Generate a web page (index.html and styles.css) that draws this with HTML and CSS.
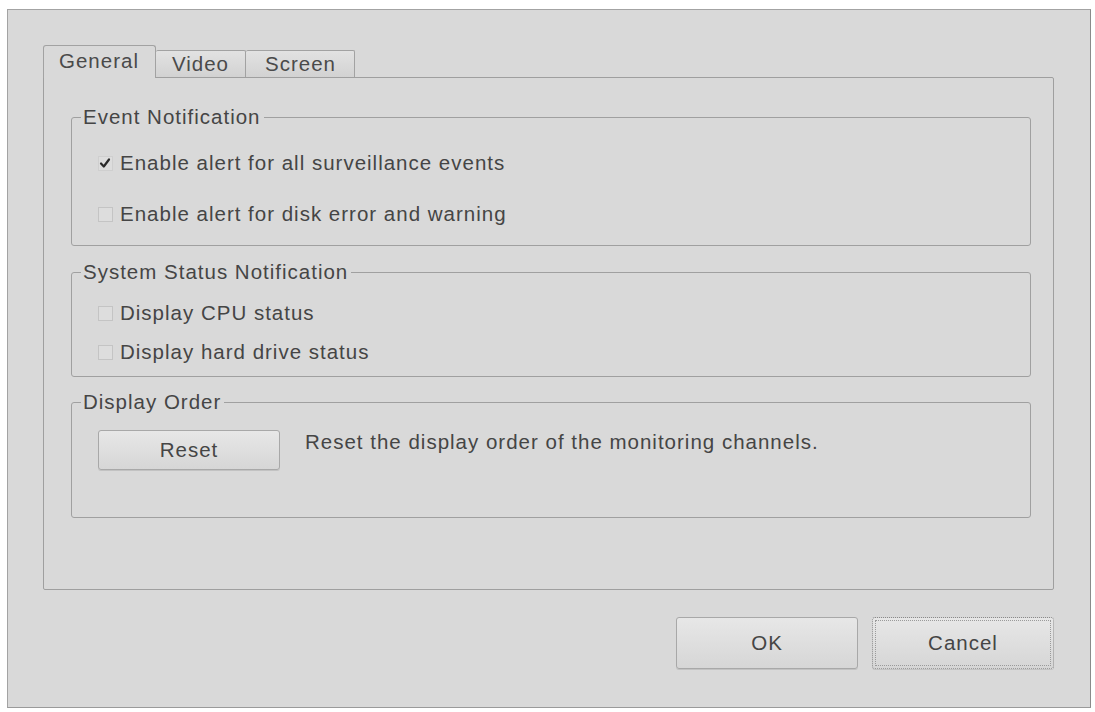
FILE: index.html
```html
<!DOCTYPE html>
<html lang="en">
<head>
<meta charset="utf-8">
<title>Settings</title>
<link rel="stylesheet" href="styles.css">
</head>
<body>
<div class="dialog">
  <div class="tabwidget">
    <div class="tabbar">
      <div class="tab tab-active">General</div>
      <div class="tab">Video</div>
      <div class="tab tab-wide">Screen</div>
    </div>
    <div class="panel">
      <fieldset class="group group-event">
        <legend>Event Notification</legend>
        <label class="row row-first">
          <span class="cb cb-checked"><svg viewBox="0 0 15 15" width="15" height="15"><path d="M3 7.5 L5.8 10.5 L11 3.5" fill="none" stroke="#2a2a2a" stroke-width="2.2" stroke-linecap="round" stroke-linejoin="round"/></svg></span>
          <span class="txt">Enable alert for all surveillance events</span>
        </label>
        <label class="row row-wide">
          <span class="cb"></span>
          <span class="txt">Enable alert for disk error and warning</span>
        </label>
      </fieldset>
      <fieldset class="group group-status">
        <legend>System Status Notification</legend>
        <label class="row row-first">
          <span class="cb"></span>
          <span class="txt">Display CPU status</span>
        </label>
        <label class="row row-tight">
          <span class="cb"></span>
          <span class="txt">Display hard drive status</span>
        </label>
      </fieldset>
      <fieldset class="group group-order">
        <legend>Display Order</legend>
        <div class="order-row">
          <button class="btn btn-reset" type="button">Reset</button>
          <span class="order-text">Reset the display order of the monitoring channels.</span>
        </div>
      </fieldset>
    </div>
  </div>
  <div class="actions">
    <button class="btn btn-action" type="button">OK</button>
    <button class="btn btn-action btn-focus" type="button">Cancel</button>
  </div>
</div>
</body>
</html>
```

FILE: styles.css
```css
* { box-sizing: border-box; }

html, body {
  margin: 0;
  padding: 0;
  background: #ffffff;
}

body {
  font-family: "Liberation Sans", Arial, sans-serif;
  font-size: 20.5px;
  letter-spacing: 1px;
  color: #454545;
}

.dialog {
  margin: 9px 0 0 7px;
  width: 1084px;
  height: 699px;
  background: #d9d9d9;
  border: 1px solid #a3a3a3;
  border-right-color: #8a8a8a;
  border-bottom-color: #9a9a9a;
  padding: 35px 36px 0 35px;
}

/* ---- tabs ---- */
.tabbar {
  display: flex;
  align-items: flex-end;
  height: 32px;
  position: relative;
  z-index: 1;
}

.tab {
  height: 27px;
  line-height: 25px;
  padding: 0 16px;
  border: 1px solid #a2a2a2;
  border-bottom: none;
  border-left: none;
  border-radius: 2px 2px 0 0;
  background: linear-gradient(#e2e2e2, #d2d2d2);
  color: #4a4a4a;
}

.tab-wide {
  padding: 0 18px 0 19px;
}

.tab-active {
  height: 33px;
  margin-bottom: -1px;
  line-height: 30px;
  padding: 0 16px 0 15px;
  border-left: 1px solid #a2a2a2;
  background: #d9d9d9;
  border-radius: 3px 3px 0 0;
}

.panel {
  height: 513px;
  border: 1px solid #9f9f9f;
  border-radius: 0 2px 2px 2px;
  padding: 27px 22px 0 27px;
}

/* ---- group boxes ---- */
.group {
  margin: 0;
  border: 1px solid #a0a0a0;
  border-radius: 3px;
  padding: 0 0 0 9px;
  min-width: 0;
}

.group + .group {
  margin-top: 14px;
}

.group legend {
  padding: 0 3px 0 2px;
  line-height: 24px;
  color: #454545;
}

.group-event { padding-top: 22px; padding-bottom: 19px; }
.group-status { padding-top: 17px; padding-bottom: 12px; }
.group.group-order { margin-top: 13px; padding-top: 16px; padding-bottom: 47px; }

.row {
  display: flex;
  align-items: center;
  height: 24px;
  padding-left: 17px;
}

.row-wide { margin-top: 27px; }
.row-tight { margin-top: 15px; }

.cb {
  width: 15px;
  height: 15px;
  flex: none;
  margin-right: 7px;
  border: 1px solid #c4c4c4;
  background: #dddddd;
  display: flex;
  align-items: center;
  justify-content: center;
}

.cb svg { display: block; flex: none; }

.cb-checked {
  border-color: #cfcfcf;
}

.txt { white-space: nowrap; }

/* ---- display order ---- */
.order-row {
  display: flex;
  align-items: flex-start;
  padding-left: 17px;
}

.order-text {
  margin-left: 25px;
  line-height: 24px;
  white-space: nowrap;
}

/* ---- buttons ---- */
.btn {
  font-family: inherit;
  font-size: 20.5px;
  letter-spacing: 1px;
  color: #454545;
  border: 1px solid #a8a8a8;
  border-radius: 3px;
  background: linear-gradient(#e7e7e7, #d6d6d6);
  box-shadow: 0 1px 0 #c2c2c2;
  padding: 0;
  margin: 0;
}

.btn-reset {
  width: 182px;
  height: 40px;
}

.actions {
  display: flex;
  justify-content: flex-end;
  gap: 14px;
  margin-top: 27px;
}

.btn-action {
  width: 182px;
  height: 52px;
}

.btn-focus {
  border: 1px dotted #8a8a8a;
  outline: 1px dotted #9a9a9a;
  outline-offset: -4px;
}
```
